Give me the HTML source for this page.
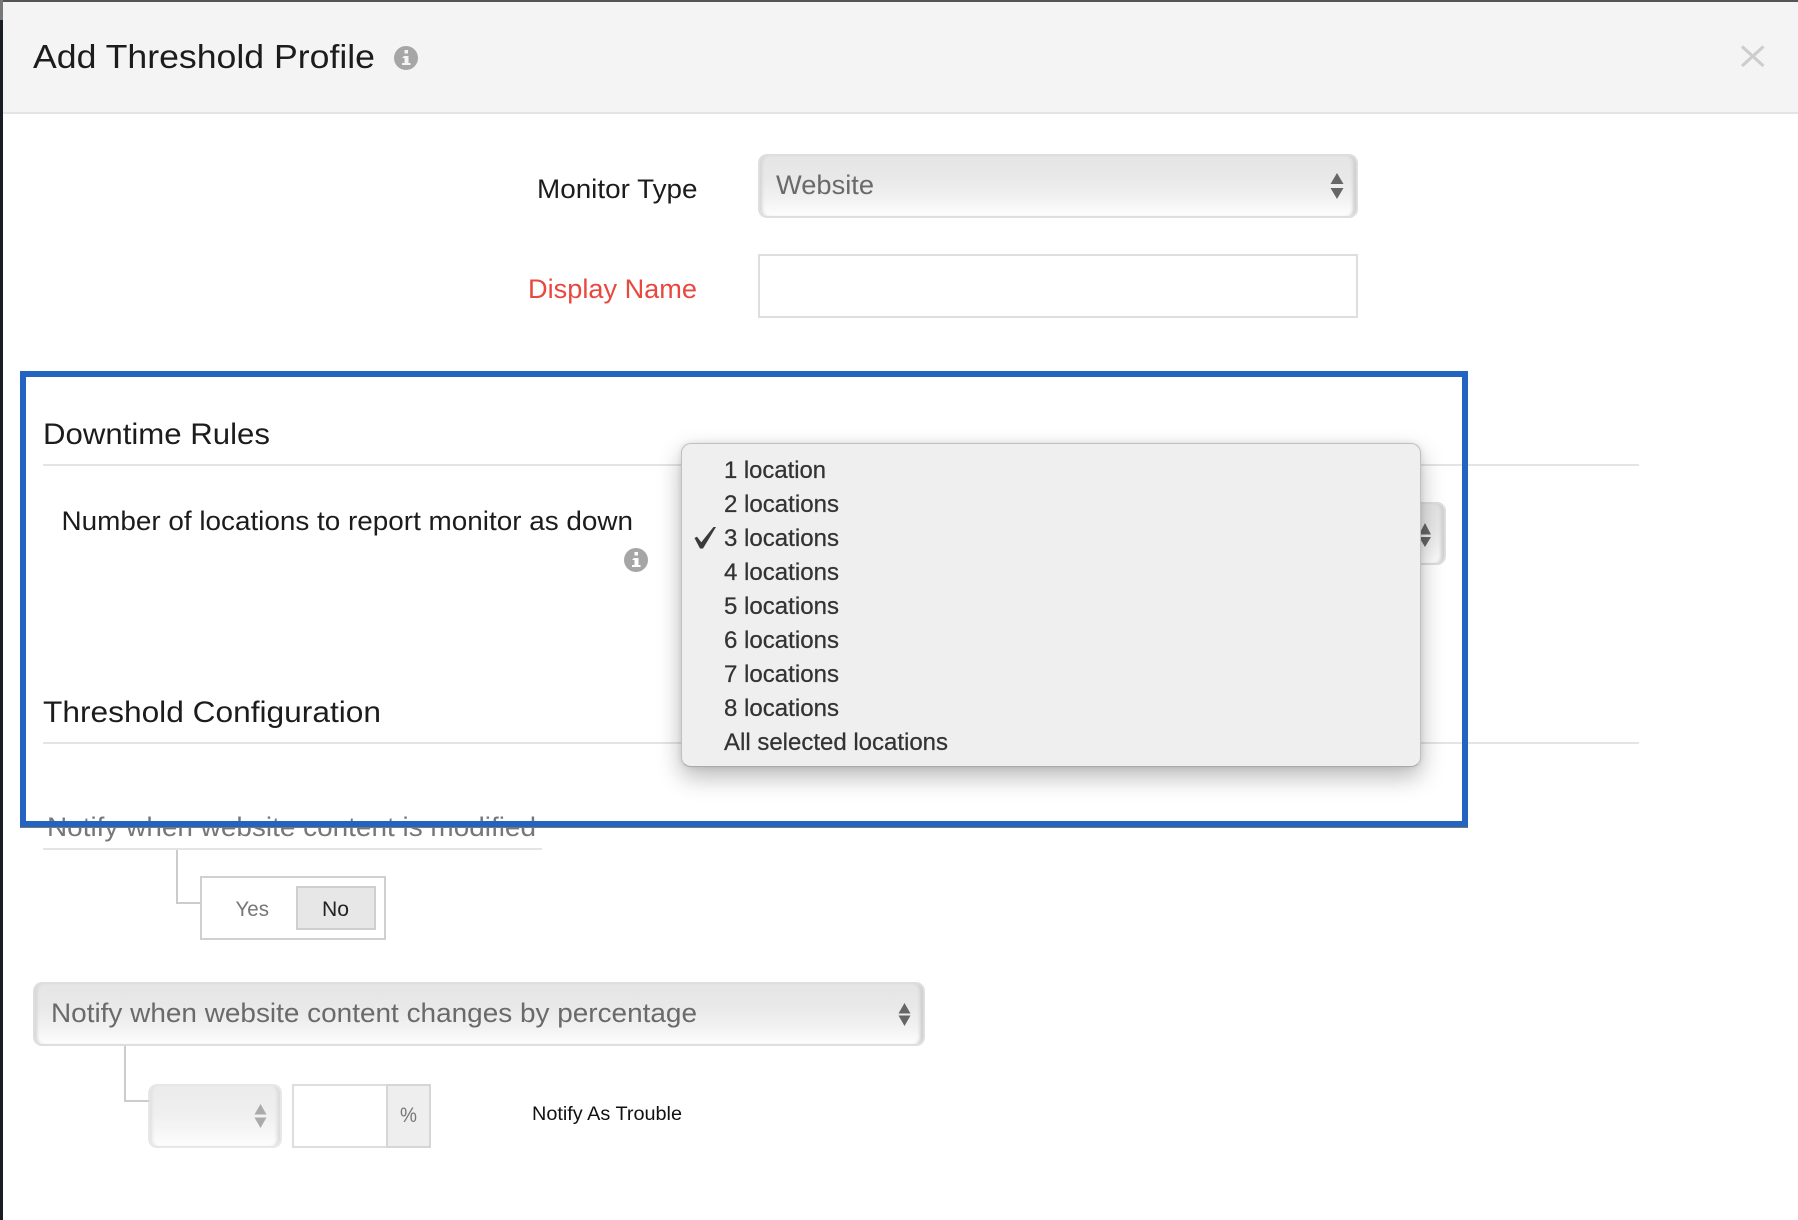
<!DOCTYPE html>
<html lang="en">
<head>
<meta charset="utf-8">
<title>Add Threshold Profile</title>
<style>
html,body{margin:0;padding:0;background:#fff;width:1798px;height:1220px;overflow:hidden;font-family:"Liberation Sans",sans-serif}
.b{position:absolute;box-sizing:border-box}
.sel{border:2px solid #dedede;border-radius:9px;background:linear-gradient(#e5e5e5 0%,#e9e9e9 40%,#f2f2f2 72%,#fdfdfd 100%);box-shadow:inset 4px 0 3px -2px #d4d4d4,inset -5px 0 3px -2px #cfcfcf}
svg{position:absolute;left:0;top:0}
text{font-family:"Liberation Sans",sans-serif}
</style>
</head>
<body>
<!-- frame -->
<div class="b" style="left:3px;top:2px;width:1795px;height:112px;background:#f4f4f4;border-bottom:2px solid #e4e4e4"></div>
<div class="b" style="left:0;top:0;width:1798px;height:2px;background:#555"></div>
<div class="b" style="left:0;top:20px;width:3px;height:1200px;background:#1a1d24"></div>
<div class="b" style="left:0;top:0;width:3px;height:20px;background:#777"></div>

<!-- form boxes -->
<div class="b sel" style="left:758px;top:154px;width:600px;height:64px"></div>
<div class="b" style="left:758px;top:254px;width:600px;height:64px;border:2px solid #dedede"></div>
<div class="b" style="left:43px;top:464px;width:1596px;height:2px;background:#e4e4e4"></div>
<div class="b sel" style="left:720px;top:502px;width:726px;height:63px"></div>
<div class="b" style="left:43px;top:742px;width:1596px;height:2px;background:#e4e4e4"></div>
<div class="b" style="left:43px;top:848px;width:499px;height:2px;background:#e4e4e4"></div>

<!-- connectors -->
<div class="b" style="left:176px;top:850px;width:2px;height:54px;background:#ccc"></div>
<div class="b" style="left:176px;top:902px;width:25px;height:2px;background:#ccc"></div>
<div class="b" style="left:124px;top:1046px;width:2px;height:56px;background:#ccc"></div>
<div class="b" style="left:124px;top:1100px;width:26px;height:2px;background:#ccc"></div>

<!-- yes/no -->
<div class="b" style="left:200px;top:876px;width:186px;height:64px;border:2px solid #d0d0d0;background:#fff"></div>
<div class="b" style="left:296px;top:886px;width:80px;height:44px;border:2px solid #cfcfcf;background:#e7e7e7"></div>

<!-- percentage row -->
<div class="b sel" style="left:33px;top:982px;width:892px;height:64px"></div>
<div class="b sel" style="left:148px;top:1084px;width:134px;height:64px;opacity:.72"></div>
<div class="b" style="left:292px;top:1084px;width:96px;height:64px;border:2px solid #dedede;border-right:0;background:#fff"></div>
<div class="b" style="left:386px;top:1084px;width:45px;height:64px;border:2px solid #d6d6d6;background:#eee"></div>

<svg width="1798" height="1220" viewBox="0 0 1798 1220" xmlns="http://www.w3.org/2000/svg">
  <text x="33" y="68" font-size="33" fill="#1c1c1c" textLength="342" lengthAdjust="spacingAndGlyphs">Add Threshold Profile</text>
  <g>
    <circle cx="406" cy="58" r="12" fill="#a6a6a6"/>
    <path d="M404 56h4.500v7h2v2h-8.500v-2h2.500v-5h-2.500zM404.500 50h3.500v3.500h-3.500z" fill="#f4f4f4"/>
  </g>
  <path d="M1742 46.500L1763.500 66M1763.500 46.500L1742 66" stroke="#cdcdcd" stroke-width="3.200" fill="none"/>

  <text x="537" y="198" font-size="27" fill="#1c1c1c" textLength="160.500" lengthAdjust="spacingAndGlyphs">Monitor Type</text>
  <text x="528" y="298" font-size="27" fill="#e8483f" textLength="169" lengthAdjust="spacingAndGlyphs">Display Name</text>
  <text x="776" y="194" font-size="27" fill="#6a6a6a" textLength="98" lengthAdjust="spacingAndGlyphs">Website</text>
  <path d="M1337 173l6.500 11h-13zM1337 199l6.500-11h-13z" fill="#666"/>

  <text x="43" y="444" font-size="30" fill="#1c1c1c" textLength="227" lengthAdjust="spacingAndGlyphs">Downtime Rules</text>
  <text x="61.500" y="530" font-size="27" fill="#1c1c1c" textLength="571.500" lengthAdjust="spacingAndGlyphs">Number of locations to report monitor as down</text>
  <g>
    <circle cx="636" cy="560" r="12" fill="#a6a6a6"/>
    <path d="M634 558h4.500v7h2v2h-8.500v-2h2.500v-5h-2.500zM634.500 552h3.500v3.500h-3.500z" fill="#fff"/>
  </g>
  <path d="M1425 523l6 11.500h-12zM1425 547l6-10h-12z" fill="#666"/>
  <text x="43" y="722" font-size="30" fill="#1c1c1c" textLength="338" lengthAdjust="spacingAndGlyphs">Threshold Configuration</text>

  <text x="47" y="836" font-size="27" fill="#777" textLength="489" lengthAdjust="spacingAndGlyphs">Notify when website content is modified</text>
  <text x="235.500" y="916" font-size="21" fill="#777" textLength="33.500" lengthAdjust="spacingAndGlyphs">Yes</text>
  <text x="322" y="916" font-size="21" fill="#222" textLength="27" lengthAdjust="spacingAndGlyphs">No</text>
  <text x="51" y="1022" font-size="27" fill="#6a6a6a" textLength="646" lengthAdjust="spacingAndGlyphs">Notify when website content changes by percentage</text>
  <path d="M904.500 1003l6 10.500h-12zM904.500 1026l6-10.500h-12z" fill="#666"/>
  <path d="M260.500 1104l6 10.500h-12zM260.500 1128l6-10.500h-12z" fill="#aaa"/>
  <text x="400" y="1122" font-size="21" fill="#777" textLength="17" lengthAdjust="spacingAndGlyphs">%</text>
  <text x="532" y="1120" font-size="19" fill="#111" textLength="150" lengthAdjust="spacingAndGlyphs">Notify As Trouble</text>
</svg>

<!-- highlight frame -->
<div class="b" style="left:20px;top:371px;width:1448px;height:456px;border:6.500px solid #2364c0;box-shadow:0 1px 0 #777"></div>

<!-- dropdown -->
<div class="b" style="left:681px;top:443px;width:740px;height:324px;border-radius:10px;background:#efefef;border:1px solid #c0c0c0;border-bottom-color:#aaa;box-shadow:0 10px 24px rgba(0,0,0,.28),0 0 6px rgba(0,0,0,.1)"></div>
<svg width="1798" height="1220" viewBox="0 0 1798 1220" xmlns="http://www.w3.org/2000/svg">
  <g font-size="24" fill="#333" stroke="#333" stroke-width=".25">
    <text x="724" y="478" textLength="102" lengthAdjust="spacingAndGlyphs">1 location</text>
    <text x="724" y="512" textLength="115" lengthAdjust="spacingAndGlyphs">2 locations</text>
    <text x="724" y="546" textLength="115" lengthAdjust="spacingAndGlyphs">3 locations</text>
    <text x="724" y="580" textLength="115" lengthAdjust="spacingAndGlyphs">4 locations</text>
    <text x="724" y="614" textLength="115" lengthAdjust="spacingAndGlyphs">5 locations</text>
    <text x="724" y="648" textLength="115" lengthAdjust="spacingAndGlyphs">6 locations</text>
    <text x="724" y="682" textLength="115" lengthAdjust="spacingAndGlyphs">7 locations</text>
    <text x="724" y="716" textLength="115" lengthAdjust="spacingAndGlyphs">8 locations</text>
    <text x="724" y="750" textLength="224" lengthAdjust="spacingAndGlyphs">All selected locations</text>
  </g>
  <path d="M694.500 538l2.500-1.200 4.300 5.400 12.200-15.200h2.500l-13 21.500h-3z" fill="#3a3a3a"/>
</svg>
</body>
</html>
